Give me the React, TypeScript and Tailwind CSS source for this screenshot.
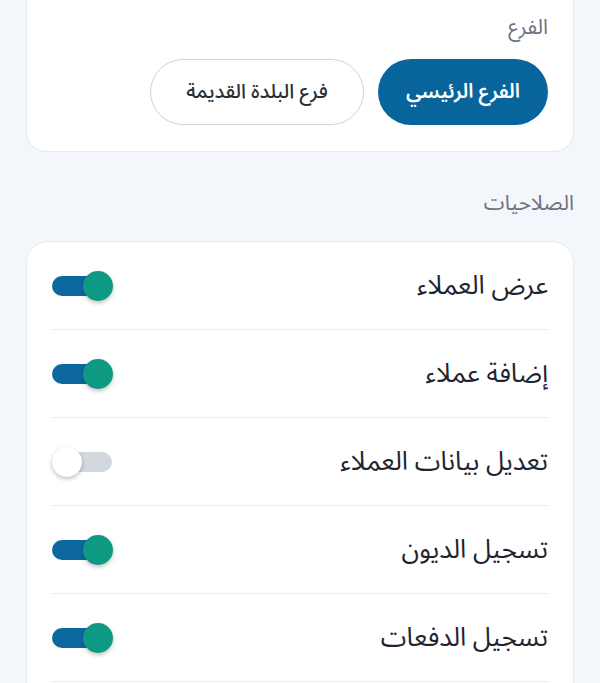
import { useState } from "react";

const PERMS = [
  { label: "عرض العملاء", on: true },
  { label: "إضافة عملاء", on: true },
  { label: "تعديل بيانات العملاء", on: false },
  { label: "تسجيل الديون", on: true },
  { label: "تسجيل الدفعات", on: true },
];

function Toggle({ on, onClick }: { on: boolean; onClick: () => void }) {
  return (
    <button
      onClick={onClick}
      className="relative h-[32px] w-[61px] flex-none"
      dir="ltr"
    >
      <span
        className={`absolute left-0 top-[6px] h-[20px] w-[60px] rounded-full ${
          on ? "bg-[#0d68a0]" : "bg-[#d3d7de]"
        }`}
      />
      <span
        className={`absolute top-[1px] h-[30px] w-[30px] rounded-full shadow-[0_2px_4px_rgba(0,0,0,0.25)] ${
          on ? "left-[31px] bg-[#0e9a82]" : "left-0 bg-white"
        }`}
      />
    </button>
  );
}

export default function App() {
  const [branch, setBranch] = useState(0);
  const [perms, setPerms] = useState(PERMS.map((p) => p.on));

  return (
    <div
      dir="rtl"
      className="min-h-screen bg-[#f3f6fa] px-[26px] pb-10"
      style={{ fontFamily: '"Noto Sans Arabic", "DejaVu Sans", sans-serif' }}
    >
      {/* branch card */}
      <div className="rounded-b-[20px] border-x border-b border-[#e6ebf1] bg-white px-[25px] pb-[26px] pt-[11px]">
        <div className="text-[21px] leading-[32px] text-[#6b7280]">الفرع</div>
        <div className="mt-[16px] flex gap-[14px]">
          {["الفرع الرئيسي", "فرع البلدة القديمة"].map((b, i) => (
            <button
              key={b}
              onClick={() => setBranch(i)}
              className={`h-[66px] rounded-full text-[20px] ${
                branch === i
                  ? "w-[170px] bg-[#07659c] font-semibold text-white"
                  : "w-[214px] border border-[#cfd3d8] bg-white font-medium text-[#2a2f36]"
              }`}
            >
              {b}
            </button>
          ))}
        </div>
      </div>

      {/* permissions */}
      <div className="mt-[35px] text-[21px] leading-[32px] text-[#6b7280]">الصلاحيات</div>
      <div className="mt-[22px] rounded-[22px] border border-[#e6ebf1] bg-white px-[25px]">
        {PERMS.map((p, i) => (
          <div
            key={p.label}
            className="flex h-[88px] items-center justify-between border-b border-[#e8ebef]"
          >
            <span className="text-[26px] text-[#1f2430]">{p.label}</span>
            <Toggle
              on={perms[i]}
              onClick={() =>
                setPerms((s) => s.map((v, k) => (k === i ? !v : v)))
              }
            />
          </div>
        ))}
        <div className="h-[40px]" />
      </div>
    </div>
  );
}
